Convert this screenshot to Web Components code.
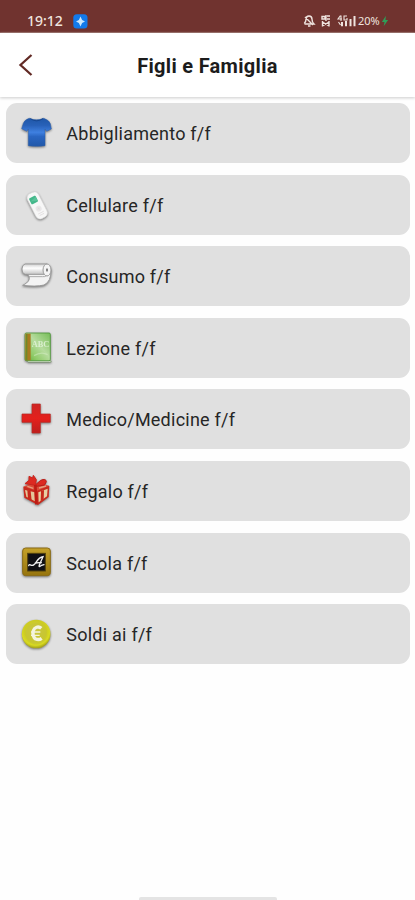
<!DOCTYPE html>
<html lang="it"><head><meta charset="utf-8"><title>Figli e Famiglia</title>
<style>
html,body{margin:0;height:100%;background:#fefefe;overflow:hidden}
body{font-family:Roboto,"Liberation Sans",sans-serif;color:#262626}
</style></head><body>
<family-screen></family-screen>
<script>
const define=(name,html,setup)=>customElements.define(name,class extends HTMLElement{
  connectedCallback(){
    const t=document.createElement('template');t.innerHTML=html;
    const r=this.attachShadow({mode:'open'});r.append(t.content.cloneNode(true));
    if(setup)setup(this,r);
  }});

const icons={
shirt:`<defs><linearGradient id="g" x1="0" y1="0" x2="0" y2="1"><stop offset="0" stop-color="#1f57a8"/><stop offset=".25" stop-color="#2861b8"/><stop offset=".5" stop-color="#3f80e0"/><stop offset=".65" stop-color="#2a66c2"/><stop offset="1" stop-color="#2158a8"/></linearGradient></defs>
<g transform="translate(0 5)"><path d="M58 41Q79 50 101 41Q117 46 121 57L124 73L110 80L105 73V123Q80 127 55 123V73L50 80L35 72L40 56Q44 45 58 41Z" fill="url(#g)" stroke="#2a5ca8" stroke-width="1.5"/><path d="M61 42Q79 55 99 42" fill="none" stroke="#184891" stroke-width="3"/></g>`,
phone:`<g transform="translate(81 91) rotate(-27)"><rect x="-18" y="-41" width="37" height="83" rx="14" fill="#f7f7f7" stroke="#dedede" stroke-width="2"/><rect x="-13" y="-29" width="22" height="20" rx="3" fill="#43b78a"/><path d="M-12-19L8-25V-11Z" fill="#59c299"/><circle cx="0" cy="11" r="9" fill="#e9e7e8"/><path d="M-9 25H10M-7 31H8M0 6V16M-5 11H5" stroke="#dcd8d9" stroke-width="2"/></g>`,
roll:`<defs><linearGradient id="g" x1="0" y1="0" x2="0" y2="1"><stop stop-color="#d0d0d0"/><stop offset=".4" stop-color="#fff"/><stop offset="1" stop-color="#c4c4c4"/></linearGradient></defs>
<g transform="translate(0 3)"><path d="M52 80C64 94 57 106 38 115Q78 120 102 114Q124 104 123 68L105 76Z" fill="#f3f3f3" stroke="#999" stroke-width="3"/><path d="M45 51H111V82H45Q35 79 36 66Q36 54 45 51Z" fill="url(#g)" stroke="#999" stroke-width="3"/><ellipse cx="111" cy="69" rx="12" ry="18" fill="#f4f4f4" stroke="#999" stroke-width="3"/><ellipse cx="111" cy="69" rx="3" ry="5" fill="#777"/><path d="M57 89H98Q105 90 109 86" fill="none" stroke="#aaa" stroke-width="3"/></g>`,
book:`<defs><linearGradient id="g" x1="1" y1="0" x2="0" y2="1"><stop stop-color="#77bd58"/><stop offset=".45" stop-color="#b6dc9e"/><stop offset=".75" stop-color="#8fcb68"/><stop offset="1" stop-color="#5eaa36"/></linearGradient></defs>
<path d="M48 124H119L124 132H54Z" fill="#eef2e8" stroke="#6c925a" stroke-width="2"/><rect x="45" y="45" width="76" height="83" rx="4" fill="url(#g)" stroke="#4d963b" stroke-width="2.5"/><path d="M46 47H62V127H46Z" fill="#a97a20"/><path d="M50 47V127" stroke="#6e8b27" stroke-width="4"/><text x="65" y="86" font-family="Liberation Serif,serif" font-size="25" font-weight="700" fill="#e2f3d9" opacity=".85">ABC</text><path d="M72 113Q94 99 113 110" fill="none" stroke="#d6eec5" stroke-width="4" opacity=".5"/>`,
cross:`<defs><linearGradient id="g" x1="0" y1="0" x2="0" y2="1"><stop stop-color="#ce2523"/><stop offset=".5" stop-color="#e4201c"/><stop offset="1" stop-color="#bd1e1d"/></linearGradient></defs><path transform="translate(0 3)" d="M66 42H91V72H121V97H91V129H66V97H36V72H66Z" fill="url(#g)" stroke="#bc2823" stroke-width="2"/>`,
gift:`<path d="M40 77L76 69L118 75L116 108L84 132L43 110Z" fill="#c82a1e"/><path d="M45 87L74 94L75 121L49 107Z" fill="#e4c79a"/><path d="M85 94L113 83L111 106L86 124Z" fill="#e7cfa3"/><path d="M52 87L62 90L65 119L54 114ZM93 90L102 87L101 115L92 121Z" fill="#c7291b"/><path d="M40 76L76 68L118 74L80 90Z" fill="#db4a36"/><path d="M52 76L70 82M87 81L108 75" stroke="#e59d80" stroke-width="4"/><path d="M77 71L92 58Q108 51 109 62L104 72L79 76Z" fill="#dc2a22" stroke="#b91d18" stroke-width="3"/><path d="M57 46L68 51L70 43L79 56L76 73L45 68L57 58Z" fill="#dc2a22" stroke="#cb241d" stroke-width="3"/><path d="M76 72L79 130" stroke="#bd1c14" stroke-width="8"/>`,
board:`<defs><linearGradient id="g" x1="0" y1="0" x2="0" y2="1"><stop stop-color="#c4a129"/><stop offset="1" stop-color="#96740d"/></linearGradient></defs><rect x="38" y="45" width="83" height="83" rx="9" fill="url(#g)" stroke="#8a6b16" stroke-width="3"/><rect x="53" y="61" width="53" height="53" fill="#101014" stroke="#51400d" stroke-width="3"/><path d="M56 98Q57 92 64 97Q72 99 80 85Q88 73 99 71L88 96Q85 105 95 97L102 95M76 90Q84 88 94 89" fill="none" stroke="#f0f0f0" stroke-width="4" stroke-linecap="round"/>`,
coin:`<defs><radialGradient id="g" cx=".48" cy=".4" r=".58"><stop stop-color="#d0cb4c"/><stop offset=".65" stop-color="#cccb22"/><stop offset=".85" stop-color="#d8da21"/><stop offset="1" stop-color="#aaa81b"/></radialGradient></defs><circle cx="78.500" cy="90" r="43" fill="url(#g)"/><circle cx="78.500" cy="89" r="32" fill="#c5c23b" opacity=".55"/><path d="M94 73C85 65 73 70 70 80Q66 98 77 105Q87 109 95 103" fill="none" stroke="#f4f4df" stroke-width="10"/><path d="M63 84H91M63 94H89" stroke="#f4f4df" stroke-width="4"/>`
};

define('status-bar',`<style>
:host{display:flex;align-items:center;height:33px;box-sizing:border-box;padding:10px 26px 0 27px;background:#70332f;color:#efe4df;border-bottom:1px solid #8a5954}
.time{font:500 14px/18px "Noto Sans",sans-serif;width:37px;white-space:nowrap}
.badge{margin-left:9px;margin-top:1px}.sys{margin-left:auto;display:flex;align-items:center}.pct{font:11px/18px "Noto Sans",sans-serif;width:23px;white-space:nowrap;letter-spacing:-.1px}
svg{display:block}
</style><span class="time">19:12</span>
<svg class="badge" width="15" height="15" viewBox="0 0 15 15"><rect x=".3" y=".3" width="14.200" height="14.200" rx="3.500" fill="#137aeb"/><path d="M7.500 2.500L9.100 5.900L12 7.500L9.100 9.100L7.500 12.500L5.900 9.100L3 7.500L5.900 5.900Z" fill="#c9e7ff"/></svg>
<span class="sys"><svg width="56" height="16" viewBox="0 0 56 16" fill="none" stroke="#efe4df" stroke-width="1.400"><path d="M2.200 10.500Q4 9 4 6.200Q4 3 7 3Q10 3 10 6.200Q10 9 12 11H2.500M6 13H8.500M3 4L11 12"/><path d="M20 3.500H23V6H20ZM25 3H28M25 6H28M20.500 8V13.500M27 8V13.500M20.500 9L27 13M20.500 13L27 9M24 2V8"/><path d="M40 9V13.300M44 8V13.300M48.500 6V13.300M52.500 3V13.300" stroke-width="2"/><path d="M38.500 2.500L36 6H40M39 2.500V8M45 3H42V7H45V5M36.500 9L38.500 12" stroke-width="1.100"/></svg><span class="pct">20%</span><svg width="8" height="16" viewBox="0 0 9 16"><path d="M5.500 2L1 9H4L3 14L8 7H5Z" fill="#2e9f58"/></svg></span>`);

define('title-bar',`<style>
:host{display:grid;grid-template-columns:52px 1fr 52px;align-items:center;height:64px;background:#fff;box-shadow:0 1px 3px #ccc;position:relative}
svg{display:block;margin-left:18px}h1{margin:1px 0 0;text-align:center;font:700 20px/26px Roboto,sans-serif;letter-spacing:.3px;white-space:nowrap;color:#1c1c1c}
</style><svg width="16" height="24" viewBox="0 0 16 24"><path d="M13.500 2L2.500 12L13.500 22" fill="none" stroke="#622a25" stroke-width="2.300"/></svg><h1><slot></slot></h1>`);

define('category-icon',`<style>:host{display:block;width:50px;height:60px}svg{display:block;filter:drop-shadow(0 1px 1px #0007)}</style><svg width="50" height="60" viewBox="0 0 150 180"></svg>`,
 (host,root)=>root.querySelector('svg').innerHTML=icons[host.getAttribute('name')]);

define('category-row',`<style>
:host{display:flex;align-items:center;height:60px;box-sizing:border-box;padding-left:4px;background:#e0e0e0;border-radius:11px}
span{margin-left:6.300px;font:18px/24px Roboto,sans-serif;letter-spacing:.24px;white-space:nowrap;padding-top:2px}
</style><slot name="icon"></slot><span><slot></slot></span>`);

define('family-screen',`<style>
:host{display:flex;flex-direction:column;height:900px;width:415px;background:#fefefe}
main{display:flex;flex-direction:column;gap:11.600px;padding:6px 5px 0 6px;flex:1}
footer{display:flex;justify-content:center;height:3px}footer i{width:138px;height:3px;border-radius:2px 2px 0 0;background:#e4e4e4}
</style><status-bar></status-bar><title-bar>Figli e Famiglia</title-bar><main>
<category-row><category-icon slot="icon" name="shirt"></category-icon>Abbigliamento f/f</category-row>
<category-row><category-icon slot="icon" name="phone"></category-icon>Cellulare f/f</category-row>
<category-row><category-icon slot="icon" name="roll"></category-icon>Consumo f/f</category-row>
<category-row><category-icon slot="icon" name="book"></category-icon>Lezione f/f</category-row>
<category-row><category-icon slot="icon" name="cross"></category-icon>Medico/Medicine f/f</category-row>
<category-row><category-icon slot="icon" name="gift"></category-icon>Regalo f/f</category-row>
<category-row><category-icon slot="icon" name="board"></category-icon>Scuola f/f</category-row>
<category-row><category-icon slot="icon" name="coin"></category-icon>Soldi ai f/f</category-row>
</main><footer><i></i></footer>`);
</script></body></html>
